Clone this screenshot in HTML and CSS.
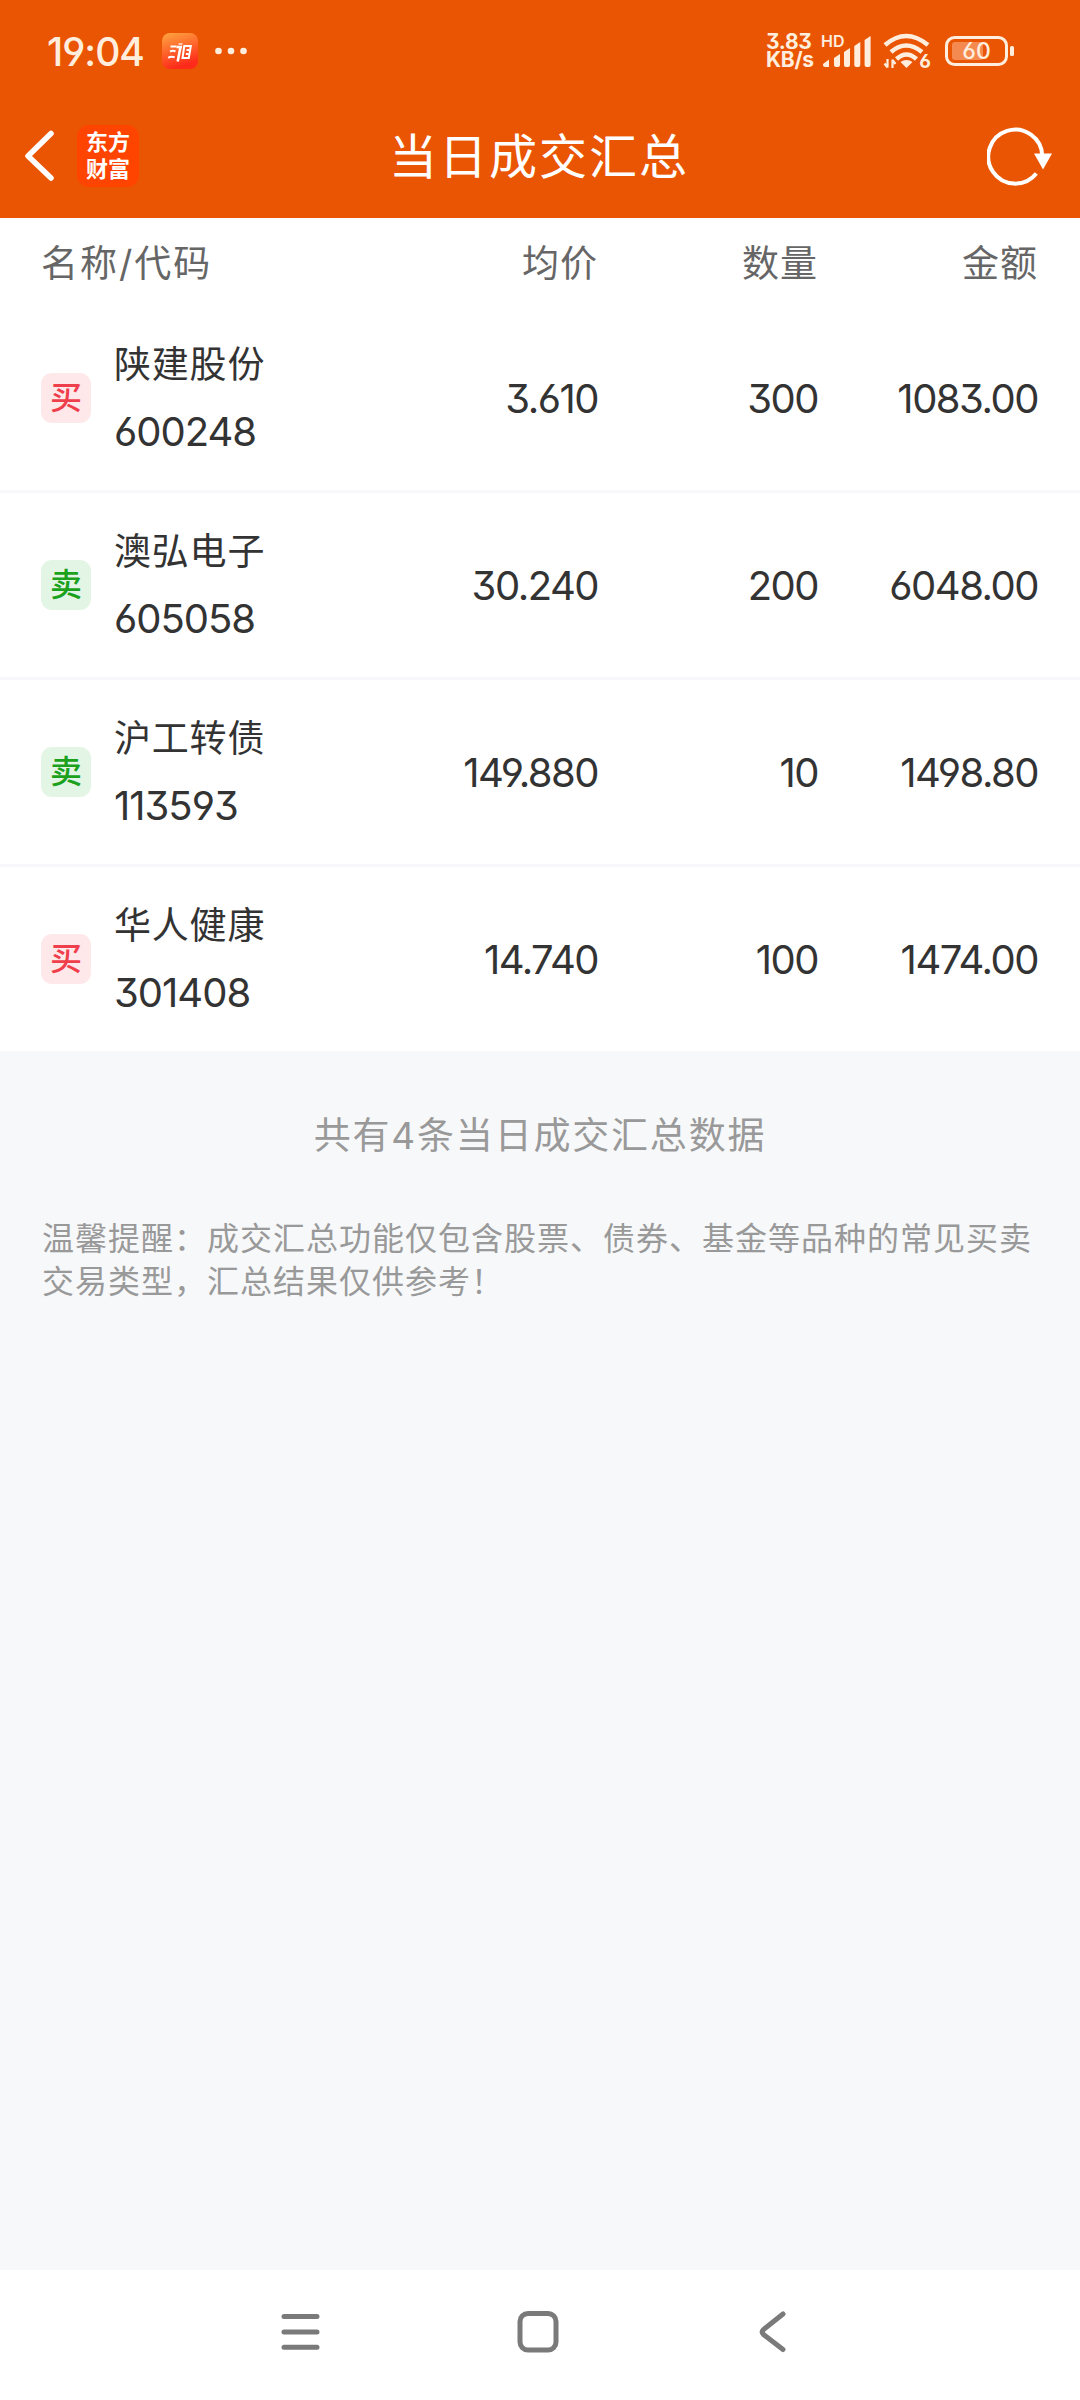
FILE: index.html
```
<!DOCTYPE html>
<html lang="zh-CN">

<head>
  <meta charset="UTF-8">
  <meta name="viewport" content="width=device-width, initial-scale=1.0">
  <title>当日成交汇总</title>
  <link rel="stylesheet" href="styles.css">
</head>

<body>
  <header class="top">
    <div class="status">
      <span class="time">19:04</span>
      <svg class="app" width="36" height="36" viewBox="0 0 36 36">
        <defs>
          <linearGradient id="appBg" x1="0" y1="0" x2="0.3" y2="1">
            <stop offset="0" stop-color="#ffa640" />
            <stop offset="1" stop-color="#ff2a1a" />
          </linearGradient>
        </defs>
        <rect width="36" height="36" rx="8" fill="url(#appBg)" />
        <g fill="none" stroke="#fff" stroke-width="2">
          <path d="M8.500 13.500h6M8 18.500q3-1.500 5.500 0M6.200 24.800q3-2 6.500-.5" />
          <path d="M14.500 14h5.500M18.500 14l-2.800 14.500" stroke-width="2.600" />
          <path d="M16.500 11h4" stroke-width="1.200" />
          <path d="M22.300 13h6.500l-2 12h-6.300zM24.500 17h2.500M23.800 21h2.500" />
        </g>
      </svg>
      <svg class="dots" width="34" height="8" viewBox="0 0 34 8" fill="#ffeedd">
        <circle cx="4.500" cy="4" r="3.300" />
        <circle cx="17" cy="4" r="3.300" />
        <circle cx="29.500" cy="4" r="3.300" />
      </svg>
      <div class="speed"><span>3.83</span><span>KB/s</span></div>
      <div class="signal">
        <span>HD</span>
        <svg width="50" height="34" viewBox="0 0 50 34" fill="#ffeedd">
          <path d="M1 31V30l6-4.500V33H3q-2 0-2-2zM12 24l6-4v11q0 2-2 2h-2q-2 0-2-2zM22 18l6-4v17q0 2-2 2h-2q-2 0-2-2zM32.300 12l6-4v23q0 2-2 2h-2q-2 0-2-2zM42.600 6l6-4v29q0 2-2 2h-2q-2 0-2-2z" />
        </svg>
      </div>
      <div class="wifi">
        <svg width="48" height="36" viewBox="0 0 48 36" fill="none" stroke="#ffeedd" stroke-width="4.500">
          <path d="M2 12q21-18 43 0M8 19q15-13 31 0M13.500 26q10-9 20 0" />
          <path d="M17.500 29q6-4 12 0l-6 6z" fill="#ffeedd" stroke="none" />
          <path d="M4.500 26v8.500M1.500 30.500l3 4M9.500 35v-8.500M9.500 27l3 4" stroke-width="2.200" />
        </svg>
        <span>6</span>
      </div>
      <div class="battery">
        <svg width="70" height="32" viewBox="0 0 70 32">
          <rect x="1.500" y="2.500" width="60" height="27" rx="8" fill="none" stroke="#ffeedd" stroke-width="3" />
          <rect x="7" y="7" width="31" height="18" rx="3" fill="#f58a50" />
          <rect x="65" y="11" width="4" height="10" rx="1.500" fill="#ffeedd" />
        </svg>
        <span>60</span>
      </div>
    </div>
    <div class="navbar">
      <svg class="back" width="32" height="52" viewBox="0 0 32 52">
        <path d="M28 3.500L5 26l23 22" fill="none" stroke="#fff" stroke-width="5.500" stroke-linecap="round" stroke-linejoin="round" />
      </svg>
      <div class="logo"><span>东方</span><span>财富</span></div>
      <h1>当日成交汇总</h1>
      <svg class="refresh" width="68" height="62" viewBox="0 0 68 62">
        <path d="M49.300 48.600A27 27 0 1 1 55.300 31" fill="none" stroke="#fff" stroke-width="4" />
        <path d="M47 28.500h18l-9 16z" fill="#fff" />
      </svg>
    </div>
  </header>

  <main>
    <section class="list">
      <div class="row head">
        <div>名称/代码</div>
        <div>均价</div>
        <div>数量</div>
        <div>金额</div>
      </div>
      <div class="row">
        <div class="stock">
          <i class="tag buy">买</i>
          <p>陕建股份<b>600248</b></p>
        </div>
        <div>3.610</div>
        <div>300</div>
        <div>1083.00</div>
      </div>
      <div class="row">
        <div class="stock">
          <i class="tag sell">卖</i>
          <p>澳弘电子<b>605058</b></p>
        </div>
        <div>30.240</div>
        <div>200</div>
        <div>6048.00</div>
      </div>
      <div class="row">
        <div class="stock">
          <i class="tag sell">卖</i>
          <p>沪工转债<b>113593</b></p>
        </div>
        <div>149.880</div>
        <div>10</div>
        <div>1498.80</div>
      </div>
      <div class="row">
        <div class="stock">
          <i class="tag buy">买</i>
          <p>华人健康<b>301408</b></p>
        </div>
        <div>14.740</div>
        <div>100</div>
        <div>1474.00</div>
      </div>
    </section>
    <p class="total">共有4条当日成交汇总数据</p>
    <p class="tips">温馨提醒：成交汇总功能仅包含股票、债券、基金等品种的常见买卖交易类型，汇总结果仅供参考！</p>
  </main>

  <!-- 系统导航键 -->
  <footer class="keys">
    <svg width="44" height="44" viewBox="0 0 44 44">
      <path d="M5 6.500h33M5 22h33M5 37.300h33" />
    </svg>
    <svg width="44" height="44" viewBox="0 0 44 44">
      <rect x="4" y="3.500" width="36" height="36.500" rx="8" />
    </svg>
    <svg width="44" height="44" viewBox="0 0 44 44">
      <path d="M31 4L11.500 19.500q-2.500 2.500 0 5L31 39.500" />
    </svg>
  </footer>
</body>

</html>
```

FILE: styles.css
```
* {
  box-sizing: border-box;
  margin: 0;
  padding: 0;
}

body {
  width: 1080px;
  height: 2400px;
  display: flex;
  flex-direction: column;
  background-color: #f7f8fa;
  color: #333;
  font-family: Inter, "Noto Sans CJK SC", sans-serif;
  font-feature-settings: "cv03", "cv04", "cv09";
}

.top {
  height: 218px;
  background-color: #ea5504;
  color: #fff;
}

/* 状态栏 */
.status {
  height: 94px;
  padding: 8px 65px 0 47px;
  display: flex;
  align-items: center;
  color: #ffeedd;
}

.time {
  width: 115px;
  font-size: 39px;
  font-weight: 500;
  letter-spacing: -1px;
}

.dots {
  margin-left: 16px;
}

.speed {
  width: 54px;
  margin-left: auto;
  display: flex;
  flex-direction: column;
  font-size: 21px;
  font-weight: 700;
  line-height: 18px;
  letter-spacing: -0.3px;
}

.signal {
  position: relative;
  width: 50px;
  height: 34px;
  margin-left: 2px;
}

.signal span {
  position: absolute;
  left: -1px;
  top: 0;
  font-size: 16px;
  font-weight: 600;
  line-height: 14px;
}

.wifi {
  position: relative;
  width: 48px;
  height: 36px;
  margin-left: 11px;
}

.wifi span {
  position: absolute;
  right: 0;
  bottom: -1px;
  font-size: 19px;
  font-weight: 700;
  line-height: 17px;
}

.battery {
  position: relative;
  width: 70px;
  height: 32px;
  margin-left: 14px;
}

.battery span {
  position: absolute;
  left: 0;
  top: 0;
  width: 63px;
  text-align: center;
  font-size: 23px;
  font-weight: 500;
  line-height: 33px;
}

/* 标题栏 */
.navbar {
  height: 124px;
  padding: 0 25px 0 23px;
  display: grid;
  grid-template-columns: 54px 62px 1fr 48px 68px;
  align-items: center;
}

.logo {
  width: 62px;
  height: 62px;
  padding-bottom: 4px;
  display: flex;
  flex-direction: column;
  align-items: center;
  justify-content: center;
  border-radius: 12px;
  background-color: #ff4400;
  font-family: "Noto Sans CJK SC", sans-serif;
  font-size: 22px;
  font-weight: 700;
  line-height: 27px;
}

.navbar h1 {
  padding-bottom: 7px;
  text-align: center;
  font-size: 48px;
  font-weight: 400;
  letter-spacing: 2px;
}

.refresh {
  grid-column: 5;
}

/* 成交列表 */
.list {
  height: 833px;
  overflow: hidden;
  background-color: #fff;
}

.row {
  height: 187px;
  padding: 0 41px;
  display: grid;
  grid-template-columns: 1fr 220px 220px 220px;
  align-items: center;
  border-bottom: 3px solid #f8f8fa;
  font-size: 40px;
  letter-spacing: -1.5px;
  text-align: right;
}

.row > :first-child {
  text-align: left;
}

.row > :not(:first-child) {
  padding-right: 1px;
}

.head {
  height: 88px;
  padding-bottom: 3px;
  border: none;
  color: #666;
  font-size: 37px;
  letter-spacing: 1px;
}

.head > :first-child {
  letter-spacing: 2px;
}

.stock {
  display: flex;
  align-items: center;
}

.stock p {
  margin-left: 23px;
  font-size: 37px;
  line-height: 67px;
  letter-spacing: 0.8px;
}

.stock b {
  display: block;
  font-size: 40px;
  font-weight: 400;
  letter-spacing: -1px;
}

.tag {
  width: 50px;
  height: 50px;
  border-radius: 11px;
  font-size: 32px;
  font-style: normal;
  font-weight: 500;
  letter-spacing: 0;
  line-height: 50px;
  text-align: center;
}

.buy {
  background-color: #ffe8ea;
  color: #ef3e4c;
}

.sell {
  background-color: #e3f5e5;
  color: #1ba11b;
}

.total {
  margin-top: 55px;
  color: #999;
  font-size: 37px;
  line-height: 60px;
  letter-spacing: 1.8px;
  text-align: center;
}

.tips {
  padding: 0 40px 0 42px;
  margin-top: 51px;
  color: #999;
  font-size: 32px;
  line-height: 43px;
  letter-spacing: 1px;
}

.keys {
  height: 130px;
  padding: 0 284px 6px 279px;
  margin-top: auto;
  display: flex;
  align-items: center;
  justify-content: space-between;
  background-color: #fff;
}

.keys svg {
  fill: none;
  stroke: #7a7a7a;
  stroke-width: 5px;
  stroke-linecap: round;
}
```
